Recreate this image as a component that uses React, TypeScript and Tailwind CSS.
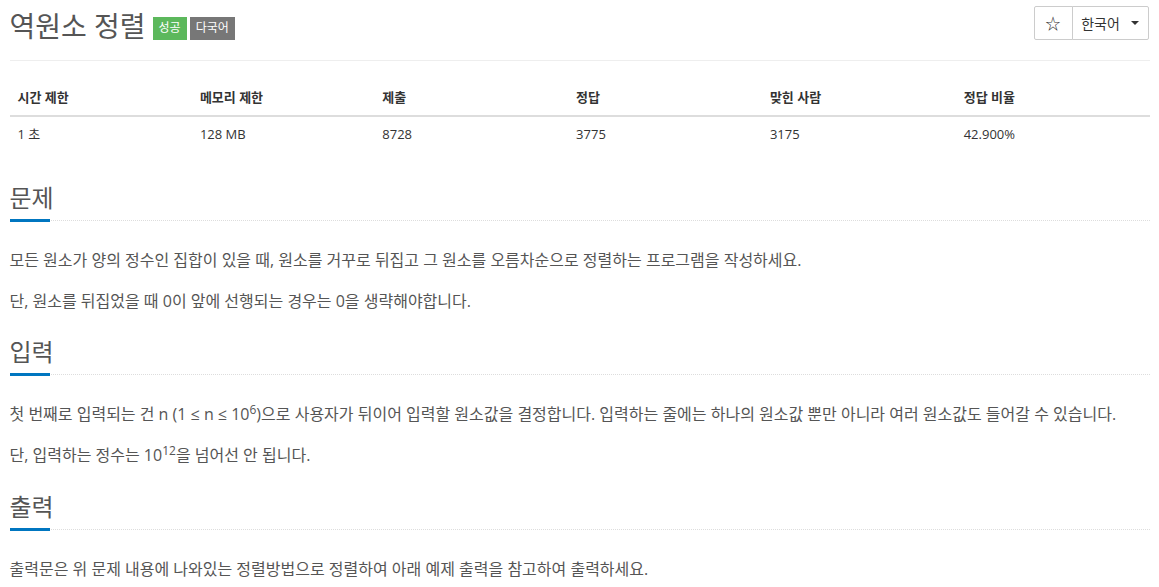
const stats = [
  { label: '시간 제한', value: '1 초', w: 'w-[16%]' },
  { label: '메모리 제한', value: '128 MB', w: 'w-[16%]' },
  { label: '제출', value: '8728', w: 'w-[17%]' },
  { label: '정답', value: '3775', w: 'w-[17%]' },
  { label: '맞힌 사람', value: '3175', w: 'w-[17%]' },
  { label: '정답 비율', value: '42.900%', w: 'w-[17%]' },
];

function Headline({ title }: { title: string }) {
  return (
    <div className="relative mb-[27px] border-b border-dotted border-[#ddd] pb-[5px]">
      <h2 className="text-[24px] leading-[34px] text-[#555]">{title}</h2>
      <span className="absolute bottom-[-2px] left-0 h-[3px] w-[40px] bg-[#0076c0]" />
    </div>
  );
}

export default function App() {
  return (
    <div
      className="mx-auto w-[1140px] text-[#333]"
      style={{ fontFamily: '"Open Sans", "Noto Sans CJK KR", sans-serif' }}
    >
      <div className="flex items-start justify-between border-b border-[#eee] pb-[15px] pt-[6px]">
        <div className="flex items-center gap-[7px] pt-[1px]">
          <h1 className="text-[28px] leading-[38px] text-[#555]">역원소 정렬</h1>
          <div className="flex gap-[3px] pt-[4px]">
            <span className="flex h-[23px] items-center bg-[#5cb85c] px-[6px] text-[12px] text-white">성공</span>
            <span className="flex h-[23px] items-center bg-[#777] px-[6px] text-[12px] text-white">다국어</span>
          </div>
        </div>
        <div className="mr-[1px] flex h-[34px]">
          <button className="w-[39px] rounded-l-[2px] border border-[#ccc] bg-white text-[15px] text-[#333]">☆</button>
          <button className="-ml-px flex w-[77px] items-center justify-center gap-[11px] rounded-r-[2px] border border-[#ccc] bg-white text-[14px] text-[#333]">
            한국어
            <span className="h-0 w-0 border-x-[4px] border-t-[4px] border-x-transparent border-t-[#333]" />
          </button>
        </div>
      </div>

      <table className="mt-[18px] w-full border-collapse text-[13px]">
        <thead>
          <tr className="border-b-2 border-[#ddd]">
            {stats.map((s) => (
              <th key={s.label} className={`${s.w} px-[8px] py-[8px] text-left font-bold leading-[20px]`}>
                {s.label}
              </th>
            ))}
          </tr>
        </thead>
        <tbody>
          <tr>
            {stats.map((s) => (
              <td key={s.label} className="px-[8px] py-[7px] leading-[20px]">
                {s.value}
              </td>
            ))}
          </tr>
        </tbody>
      </table>

      <div className="mt-[30px] text-[16px] text-[#555]">
        <Headline title="문제" />
        <div className="space-y-[17px] leading-[24px]">
          <p>모든 원소가 양의 정수인 집합이 있을 때, 원소를 거꾸로 뒤집고 그 원소를 오름차순으로 정렬하는 프로그램을 작성하세요.</p>
          <p>단, 원소를 뒤집었을 때 0이 앞에 선행되는 경우는 0을 생략해야합니다.</p>
        </div>

        <div className="mt-[22px]">
          <Headline title="입력" />
        </div>
        <div className="space-y-[17px] leading-[24px]">
          <p>
            첫 번째로 입력되는 건 n (1 ≤ n ≤ 10<sup className="text-[12px]">6</sup>)으로 사용자가 뒤이어 입력할 원소값을
            결정합니다. 입력하는 줄에는 하나의 원소값 뿐만 아니라 여러 원소값도 들어갈 수 있습니다.
          </p>
          <p>
            단, 입력하는 정수는 10<sup className="text-[12px]">12</sup>을 넘어선 안 됩니다.
          </p>
        </div>

        <div className="mt-[23px]">
          <Headline title="출력" />
        </div>
        <p className="leading-[24px]">출력문은 위 문제 내용에 나와있는 정렬방법으로 정렬하여 아래 예제 출력을 참고하여 출력하세요.</p>
      </div>
    </div>
  );
}
